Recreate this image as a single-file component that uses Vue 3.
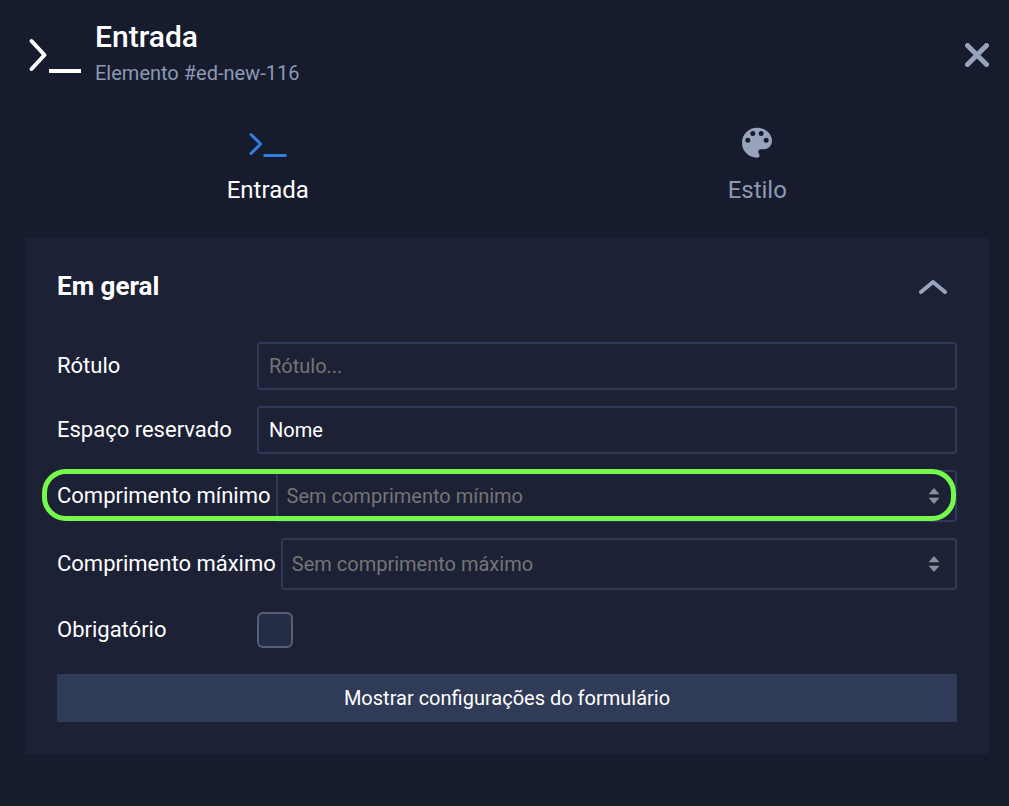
<script setup>
import { ref } from 'vue'

const label = ref('')
const placeholder = ref('Nome')
const minLength = ref('')
const maxLength = ref('')
const required = ref(false)
const expanded = ref(true)
const activeTab = ref('input')
</script>

<template>
  <main class="editor">
    <header class="header">
      <svg class="prompt" viewBox="0 0 56 40" aria-hidden="true">
        <path d="M4.500 6 L17.500 20 L4.500 34" />
        <path class="line" d="M22 36 H54" />
      </svg>
      <div class="heading">
        <h1>Entrada</h1>
        <p>Elemento #ed-new-116</p>
      </div>
      <button class="close" type="button" aria-label="Fechar">
        <svg viewBox="0 0 24 24" aria-hidden="true"><path d="M2.500 2.500 L21.500 21.500 M21.500 2.500 L2.500 21.500" /></svg>
      </button>
    </header>

    <nav class="tabs">
      <button type="button" class="tab" :class="{ active: activeTab === 'input' }" @click="activeTab = 'input'">
        <svg class="tab-prompt" viewBox="0 0 40 32" aria-hidden="true">
          <path d="M3 8.500 L12.700 18 L3 27.500" />
          <path class="line" d="M15.500 29.500 H38.500" />
        </svg>
        <span>Entrada</span>
      </button>
      <button type="button" class="tab" :class="{ active: activeTab === 'style' }" @click="activeTab = 'style'">
        <svg class="palette" viewBox="2.400 2 19.200 19.200" aria-hidden="true">
          <path d="M17.500 12A1.500 1.500 0 0 1 16 10.500 1.500 1.500 0 0 1 17.500 9 1.500 1.500 0 0 1 19 10.500 1.500 1.500 0 0 1 17.500 12m-3-4A1.500 1.500 0 0 1 13 6.500 1.500 1.500 0 0 1 14.500 5 1.500 1.500 0 0 1 16 6.500 1.500 1.500 0 0 1 14.500 8m-5 0A1.500 1.500 0 0 1 8 6.500 1.500 1.500 0 0 1 9.500 5 1.500 1.500 0 0 1 11 6.500 1.500 1.500 0 0 1 9.500 8m-3 4A1.500 1.500 0 0 1 5 10.500 1.500 1.500 0 0 1 6.500 9 1.500 1.500 0 0 1 8 10.500 1.500 1.500 0 0 1 6.500 12M12 3a9 9 0 0 0-9 9 9 9 0 0 0 9 9 1.500 1.500 0 0 0 1.500-1.500c0-.390-.150-.740-.390-1-.230-.270-.380-.620-.380-1a1.500 1.500 0 0 1 1.500-1.500H16a5 5 0 0 0 5-5c0-4.420-4.030-8-9-8z" />
        </svg>
        <span>Estilo</span>
      </button>
    </nav>

    <section class="panel">
      <button class="panel-head" type="button" :aria-expanded="expanded" @click="expanded = !expanded">
        <span>Em geral</span>
        <svg viewBox="0 0 30 16" aria-hidden="true"><path d="M3 14 L15 4 L27 14" /></svg>
      </button>

      <form v-show="expanded" class="fields" @submit.prevent>
        <div class="row">
          <label for="field-label">Rótulo</label>
          <input id="field-label" v-model="label" class="box" type="text" placeholder="Rótulo..." />
        </div>
        <div class="row">
          <label for="field-placeholder">Espaço reservado</label>
          <input id="field-placeholder" v-model="placeholder" class="box" type="text" />
        </div>
        <div class="row highlighted">
          <label for="field-min">Comprimento mínimo</label>
          <div class="box number">
            <input id="field-min" v-model="minLength" type="text" inputmode="numeric" placeholder="Sem comprimento mínimo" />
            <svg viewBox="0 0 12 18" aria-hidden="true"><path d="M6 1 L11.500 7.300 H0.500 Z M6 17 L11.500 10.700 H0.500 Z" /></svg>
          </div>
        </div>
        <div class="row">
          <label for="field-max">Comprimento máximo</label>
          <div class="box number">
            <input id="field-max" v-model="maxLength" type="text" inputmode="numeric" placeholder="Sem comprimento máximo" />
            <svg viewBox="0 0 12 18" aria-hidden="true"><path d="M6 1 L11.500 7.300 H0.500 Z M6 17 L11.500 10.700 H0.500 Z" /></svg>
          </div>
        </div>
        <div class="row check-row">
          <label for="field-required">Obrigatório</label>
          <input id="field-required" v-model="required" class="check" type="checkbox" />
        </div>
        <button class="submit" type="button">Mostrar configurações do formulário</button>
      </form>
    </section>
  </main>
</template>

<style>
body {
  background: #161b2d;
}
</style>

<style scoped>
* {
  box-sizing: border-box;
}

.editor {
  min-height: 100vh;
  padding-bottom: 52px;
  background: #161b2d;
  color: #fff;
  font-family: Roboto, "Liberation Sans", sans-serif;
  font-size: 20px;
}

button {
  padding: 0;
  border: 0;
  background: none;
  color: inherit;
  font: inherit;
  cursor: pointer;
}

svg {
  display: block;
  flex: none;
  fill: none;
  stroke: currentColor;
  stroke-linecap: round;
  stroke-linejoin: round;
}

.header {
  display: flex;
  align-items: center;
  height: 110px;
  padding: 0 20px 0 27px;
}

.prompt {
  width: 56px;
  height: 40px;
  margin-right: 12px;
  stroke-width: 4;
}

.line {
  stroke-linecap: butt;
}

.heading {
  flex: 1;
}

h1 {
  margin: 0;
  font-size: 30px;
  font-weight: 500;
  line-height: 36px;
}

p {
  margin: 0;
  padding: 4px 0 4px;
  color: #8d99b3;
  font-size: 20px;
  line-height: 28px;
}

.close svg {
  width: 24px;
  height: 24px;
  color: #98a3bc;
  stroke-width: 5;
}

.tabs {
  display: grid;
  grid-template-columns: 1fr 1fr;
  margin: 0 7px 0 23px;
  padding: 16px 0 32px;
}

.tab {
  display: flex;
  flex-direction: column;
  align-items: center;
  gap: 16px;
  color: #8d99b3;
  font-size: 24px;
  line-height: 32px;
}

.tab.active {
  color: #fff;
}

.tab svg {
  height: 32px;
}

.tab-prompt {
  width: 40px;
  stroke-width: 3;
}

.tab.active .tab-prompt {
  color: #2f80e0;
}

.palette {
  width: 32px;
  fill: #98a3bc;
  stroke: none;
}

.panel {
  margin: 0 20px 0 25px;
  padding: 32px;
  background: #1c2135;
}

.panel-head {
  display: flex;
  align-items: center;
  justify-content: space-between;
  width: 100%;
  padding-right: 9px;
  font-size: 26px;
  font-weight: 700;
  line-height: 32px;
}

.panel-head svg {
  width: 30px;
  height: 16px;
  color: #98a3bc;
  stroke-width: 4;
}

.fields {
  display: flex;
  flex-direction: column;
  gap: 16px;
  padding-top: 40px;
}

.row {
  position: relative;
  display: flex;
  align-items: center;
}

label {
  flex: none;
  min-width: 200px;
  padding-right: 5px;
  font-size: 22px;
  line-height: 32px;
}

.box {
  flex: 1;
  min-width: 0;
  height: 48px;
  padding: 0 10px;
  border: 2px solid #2f3a57;
  border-radius: 4px;
  background: transparent;
}

input {
  outline: 0;
  color: #fff;
  font: inherit;
}

input::placeholder {
  color: #757575;
  opacity: 1;
}

.number {
  display: flex;
  align-items: center;
  height: 52px;
  padding: 0 15px 0 9px;
}

.number input {
  flex: 1;
  min-width: 0;
  padding: 0;
  border: 0;
  background: transparent;
}

.number svg {
  width: 12px;
  height: 18px;
  fill: #8b8e9b;
  stroke: none;
}

.highlighted::after {
  content: "";
  position: absolute;
  inset: -1px 1px 1px -15px;
  border: 5px solid #75f94c;
  border-radius: 24px;
  pointer-events: none;
}

.check-row {
  padding: 6px 0 10px;
}

.check {
  width: 36px;
  height: 36px;
  margin: 0;
  border: 2px solid #566079;
  border-radius: 6px;
  background: #252c45;
  appearance: none;
}

.check:checked {
  background: #2f80e0;
}

.submit {
  height: 48px;
  background: #303b57;
}
</style>
